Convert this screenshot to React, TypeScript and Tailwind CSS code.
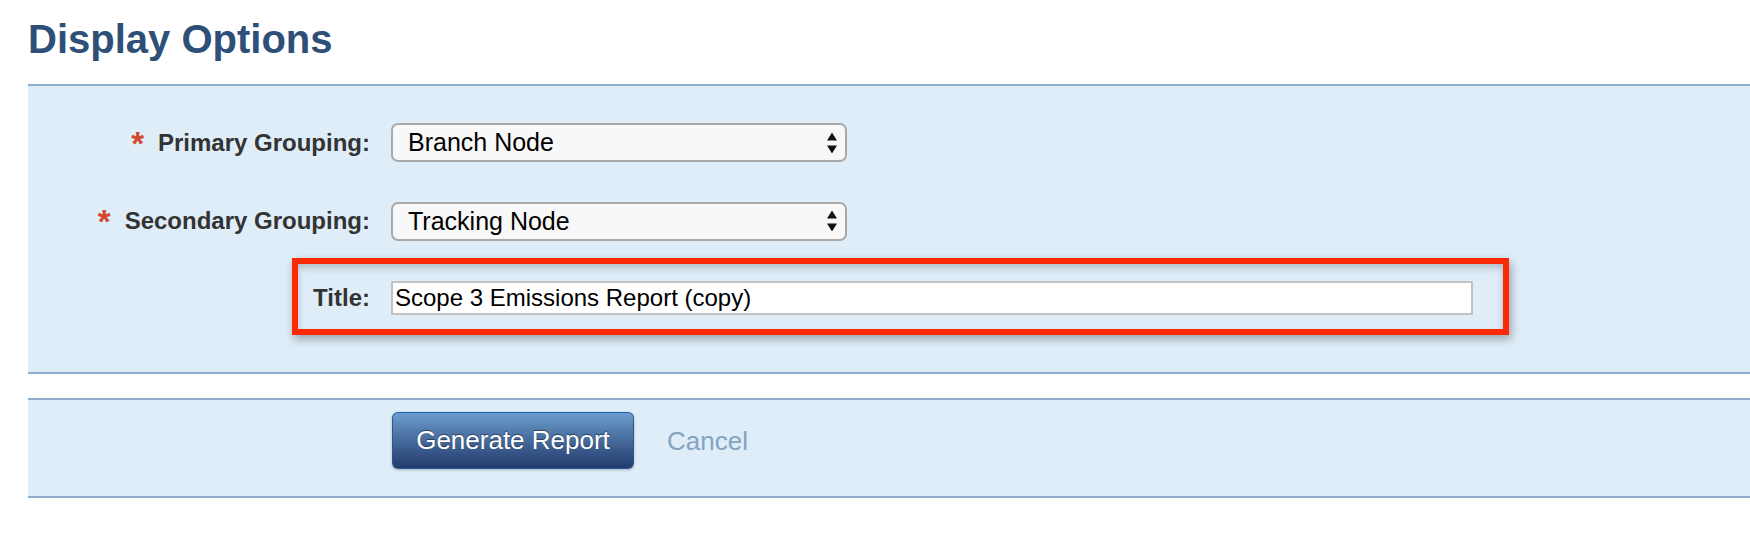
import React from 'react';

const font = "font-['Liberation_Sans',Arial,sans-serif]";

function Required() {
  return (
    <span className="relative top-[1px] mr-[14px] inline-block align-top text-[33px] font-bold leading-[28px] text-[#d6482a]">
      *
    </span>
  );
}

function SelectArrows() {
  return (
    <svg
      width="10"
      height="21"
      viewBox="0 0 10 21"
      className="pointer-events-none absolute right-[10px] top-1/2 -translate-y-1/2"
    >
      <path d="M5 0 L10 8 L0 8 Z" fill="#111" />
      <path d="M0 13 L10 13 L5 21 Z" fill="#111" />
    </svg>
  );
}

function SelectField({ value }: { value: string }) {
  return (
    <div className="relative ml-[21px] w-[456px]">
      <select
        defaultValue={value}
        className="h-[39px] w-full appearance-none rounded-[7px] border-2 border-[#a9a9a9] bg-[#f8f8f8] pl-[15px] text-[25px] leading-[35px] text-black outline-none"
      >
        <option>{value}</option>
      </select>
      <SelectArrows />
    </div>
  );
}

export default function App() {
  return (
    <div className={`${font} min-h-[534px] w-[1750px] bg-white`}>
      <h2 className="ml-[28px] pt-[17px] text-[40px] font-bold leading-[44px] text-[#2d4f78]">
        Display Options
      </h2>

      <div className="ml-[28px] mt-[23px] border-y-2 border-[#8eaccb] bg-[#deedf8] py-[37px]">
        <div className="flex h-[39px] items-center">
          <div className="w-[342px] text-right text-[24px] font-bold leading-[28px] text-[#333]">
            <Required />
            Primary Grouping:
          </div>
          <SelectField value="Branch Node" />
        </div>

        <div className="mt-[39px] flex h-[40px] items-center">
          <div className="w-[342px] text-right text-[24px] font-bold leading-[28px] text-[#333]">
            <Required />
            Secondary Grouping:
          </div>
          <SelectField value="Tracking Node" />
        </div>

        <div className="ml-[264px] mt-[17px] flex h-[77px] w-[1217px] items-center border-[6px] border-[#fb2a06] pt-[3px] shadow-[2px_4px_9px_rgba(0,0,0,0.32),inset_0_4px_7px_rgba(0,0,0,0.2)]">
          <div className="w-[72px] text-right text-[24px] font-bold leading-[28px] text-[#333]">
            Title:
          </div>
          <input
            readOnly
            value="Scope 3 Emissions Report (copy)"
            className="ml-[21px] h-[34px] w-[1082px] border-2 border-[#c2c2c2] bg-white pl-[2px] text-[24px] text-black outline-none"
          />
        </div>
      </div>

      <div className="ml-[28px] mt-[24px] border-y-2 border-[#8eaccb] bg-[#deedf8] pb-[27px] pl-[364px] pt-[12px]">
        <div className="flex items-center">
          <button className="h-[57px] w-[242px] rounded-[6px] border border-[#2a5694] border-t-[#1b62bd] bg-gradient-to-b from-[#6d9dcd] to-[#223b6c] text-[26px] text-white shadow-[0_1px_3px_rgba(0,0,0,0.25)] [text-shadow:0_-1px_1px_rgba(0,0,0,0.45)]">
            Generate Report
          </button>
          <span className="ml-[33px] text-[26px] leading-[30px] text-[#84a3c3]">Cancel</span>
        </div>
      </div>
    </div>
  );
}
